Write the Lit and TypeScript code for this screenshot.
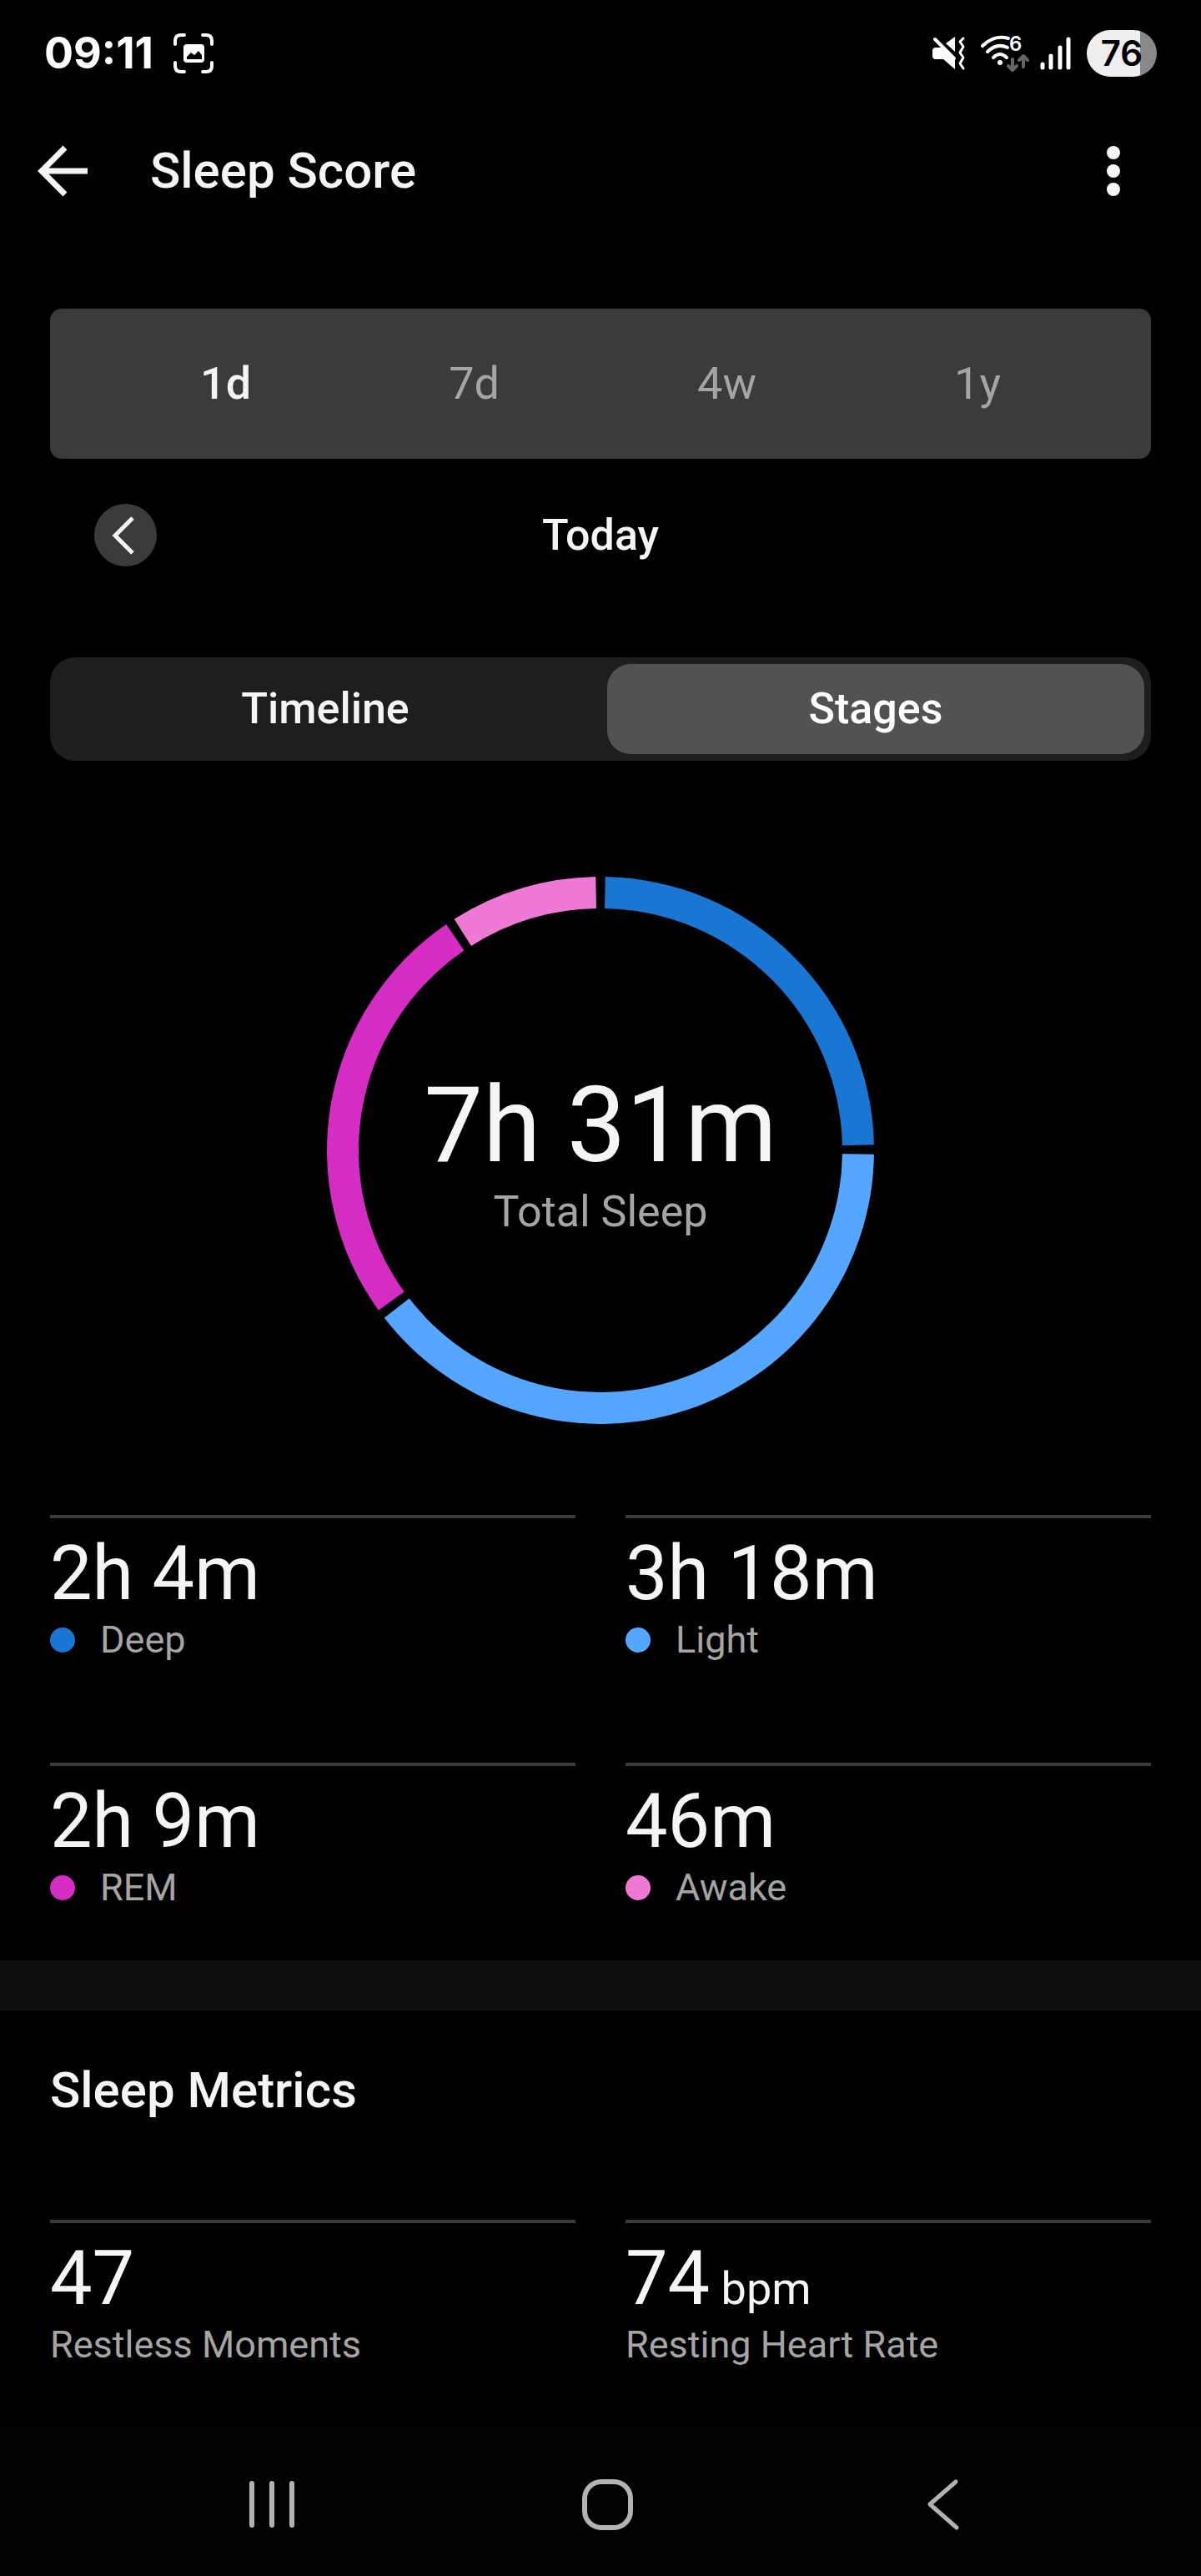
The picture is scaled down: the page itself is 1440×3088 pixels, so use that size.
import { LitElement, html, svg, css } from "lit";
import { customElement, state } from "lit/decorators.js";
import { classMap } from "lit/directives/class-map.js";

interface Stage {
  name: string;
  minutes: number;
  color: string;
}

const STAGES: Stage[] = [
  { name: "Deep", minutes: 124, color: "#1976d2" },
  { name: "Light", minutes: 198, color: "#54a6ff" },
  { name: "REM", minutes: 129, color: "#d52cc3" },
  { name: "Awake", minutes: 46, color: "#ee7ad5" },
];

const formatMinutes = (total: number): string => {
  const hours = Math.floor(total / 60);
  const minutes = total % 60;
  return hours > 0 ? `${hours}h ${minutes}m` : `${minutes}m`;
};

@customElement("status-bar")
export class StatusBar extends LitElement {
  static styles = css`
    :host {
      display: flex;
      align-items: center;
      justify-content: space-between;
      height: 128px;
      padding: 0 53px;
      color: #fff;
      font-family: Inter, Roboto, sans-serif;
    }
    .side {
      display: flex;
      align-items: center;
    }
    .left {
      gap: 24px;
    }
    .clock {
      font-size: 52px;
      line-height: 64px;
      font-weight: 700;
    }
    svg {
      display: block;
    }
    .mute {
      margin-right: 16px;
    }
    .wifi {
      margin-right: 12px;
    }
    .signal {
      margin-right: 18px;
    }
    .wifi-gen {
      font-size: 24px;
      font-weight: 600;
    }
    .battery {
      display: flex;
      align-items: center;
      justify-content: center;
      width: 84px;
      height: 56px;
      border-radius: 28px;
      background: linear-gradient(to right, #eee 76%, #888 76%);
      color: #000;
      font-size: 42px;
      line-height: 56px;
      font-weight: 600;
    }
  `;

  render() {
    return html`
      <div class="side left">
        <span class="clock">09:11</span>
        <svg width="48" height="48" viewBox="0 0 48 48" aria-hidden="true">
          <path d="M2 13V9Q2 2 9 2H13M35 2H39Q46 2 46 9V13M46 35V39Q46 46 39 46H35M13 46H9Q2 46 2 39V35" fill="none" stroke="#fff" stroke-width="4" stroke-linecap="round" />
          <rect x="12" y="13" width="25" height="22" rx="4" fill="#fff" />
          <path d="M16 31V28L21 23L25 26L30 21L34 26V31Z" fill="#000" />
        </svg>
      </div>
      <div class="side">
        <svg class="mute" width="42" height="42" viewBox="0 0 42 42" aria-hidden="true">
          <path d="M1 18Q1 14 5 14H13L28 29V40L14 28H5Q1 28 1 24ZM17 9L28 1V19Z" fill="#fff" />
          <path d="M4 4L27 27" stroke="#fff" stroke-width="4" stroke-linecap="round" />
          <path d="M38 3L34 7L38 13L34 20L38 26L34 33L38 39" fill="none" stroke="#fff" stroke-width="3" stroke-linecap="round" stroke-linejoin="round" />
        </svg>
        <svg class="wifi" width="60" height="62" viewBox="0 -8 60 62" aria-hidden="true">
          <path d="M3 14Q17 0 34 5M9 21Q20 10 33 16M16 28Q24 20 32 28" fill="none" stroke="#fff" stroke-width="4" stroke-linecap="round" />
          <circle cx="24" cy="34" r="3" fill="#fff" />
          <text class="wifi-gen" x="35" y="20" fill="#fff">6</text>
          <path d="M39 30V43M34 38L39 43L44 38M52 39V26M47 31L52 26L57 31" fill="none" stroke="#666" stroke-width="4" stroke-linecap="round" stroke-linejoin="round" />
        </svg>
        <svg class="signal" width="38" height="42" viewBox="0 0 38 42" aria-hidden="true">
          <path d="M3 34V38M13 24V38M24 14V38M34 4V38" stroke="#fff" stroke-width="5" stroke-linecap="round" />
        </svg>
        <span class="battery">76</span>
      </div>
    `;
  }
}

@customElement("sleep-donut")
export class SleepDonut extends LitElement {
  static styles = css`
    :host {
      display: grid;
      place-items: center;
    }
    .ring,
    .total {
      grid-area: 1 / 1;
    }
    .ring {
      display: block;
      width: 656px;
      height: 656px;
    }
    .total {
      display: flex;
      flex-direction: column;
      align-items: center;
      gap: 8px;
      padding-top: 12px;
    }
    .value {
      font-size: 126px;
      line-height: 128px;
      color: #f5f5f5;
    }
    .label {
      font-size: 52px;
      line-height: 64px;
      color: #a5a5a5;
    }
  `;

  private arc(from: number, to: number): string {
    const point = (deg: number, r: number) => {
      const a = ((deg - 90) * Math.PI) / 180;
      return `${(328 + r * Math.cos(a)).toFixed(2)} ${(328 + r * Math.sin(a)).toFixed(2)}`;
    };
    const large = to - from > 180 ? 1 : 0;
    return `M${point(from, 328)}A328 328 0 ${large} 1 ${point(to, 328)}L${point(to, 290)}A290 290 0 ${large} 0 ${point(from, 290)}Z`;
  }

  render() {
    const sum = STAGES.reduce((n, s) => n + s.minutes, 0);
    let angle = 0;
    const arcs = STAGES.map((s) => {
      const from = angle;
      angle += (s.minutes / sum) * 360;
      return svg`<path d=${this.arc(from + 1, angle - 1)} fill=${s.color} />`;
    });
    const asleep = STAGES.filter((s) => s.name !== "Awake").reduce((n, s) => n + s.minutes, 0);
    return html`
      <svg class="ring" viewBox="0 0 656 656" aria-hidden="true">${arcs}</svg>
      <div class="total">
        <span class="value">${formatMinutes(asleep)}</span>
        <span class="label">Total Sleep</span>
      </div>
    `;
  }
}

@customElement("app-root")
export class AppRoot extends LitElement {
  @state() private period = "1d";
  @state() private view = "Stages";

  static styles = css`
    :host {
      display: flex;
      flex-direction: column;
      min-height: 100vh;
      background: #000;
      color: #f5f5f5;
      font-family: Roboto, sans-serif;
    }
    button {
      display: flex;
      align-items: center;
      justify-content: center;
      margin: 0;
      padding: 0;
      border: 0;
      background: none;
      color: inherit;
      font: inherit;
    }
    svg {
      display: block;
    }
    h1,
    h2,
    dl,
    dd {
      margin: 0;
    }
    .app-bar {
      display: flex;
      align-items: center;
      height: 154px;
      padding: 0 60px 0 40px;
    }
    .back {
      margin-right: 68px;
    }
    .title,
    .section-title {
      font-size: 60px;
      line-height: 72px;
      font-weight: 500;
    }
    .title {
      flex: 1;
    }
    .content {
      display: flex;
      flex-direction: column;
      padding: 88px 60px 0;
    }
    .periods {
      display: flex;
      justify-content: space-between;
      height: 180px;
      padding: 0 180px;
      border-radius: 14px;
      background: #3b3b3b;
    }
    .period {
      font-size: 54px;
      line-height: 64px;
      color: #a5a5a5;
    }
    .period.active {
      font-weight: 500;
      color: #f5f5f5;
    }
    .day {
      display: grid;
      grid-template-columns: 75px 1fr 75px;
      align-items: center;
      padding: 54px 53px 0;
      font-size: 52px;
      line-height: 75px;
      font-weight: 500;
      text-align: center;
    }
    .prev {
      width: 75px;
      height: 75px;
      border-radius: 50%;
      background: #3b3b3b;
    }
    .views {
      display: grid;
      grid-template-columns: 1fr 1fr;
      gap: 16px;
      margin-top: 109px;
      padding: 8px;
      border-radius: 30px;
      background: #1e1e1e;
    }
    .view {
      height: 108px;
      border-radius: 28px;
      font-size: 52px;
      line-height: 64px;
      font-weight: 500;
    }
    .view.active {
      background: #525252;
      color: #fff;
    }
    .donut {
      margin-top: 139px;
    }
    .stats {
      display: grid;
      grid-template-columns: 1fr 1fr;
      column-gap: 60px;
      row-gap: 119px;
    }
    .stages {
      margin-top: 109px;
    }
    .stat {
      display: flex;
      flex-direction: column;
      padding-top: 16px;
      border-top: 4px solid #3b3b3b;
    }
    .stat-value {
      font-size: 90px;
      line-height: 102px;
    }
    .unit {
      font-size: 54px;
      line-height: 54px;
    }
    .stat-label {
      display: flex;
      align-items: center;
      gap: 30px;
      order: 1;
      font-size: 45px;
      line-height: 56px;
      color: #a5a5a5;
    }
    .dot {
      width: 30px;
      height: 30px;
      border-radius: 50%;
    }
    .band {
      height: 60px;
      margin-top: 59px;
      background: #101010;
    }
    .metrics {
      display: flex;
      flex-direction: column;
      gap: 119px;
      padding: 60px 60px 0;
    }
    .nav {
      display: flex;
      box-sizing: border-box;
      align-items: center;
      justify-content: space-between;
      height: 180px;
      margin-top: auto;
      padding: 8px 265px 0 280px;
      background: #020202;
    }
  `;

  private periodButton(name: string) {
    return html`<button
      class=${classMap({ period: true, active: this.period === name })}
      aria-pressed=${this.period === name}
      @click=${() => (this.period = name)}
    >${name}</button>`;
  }

  private viewButton(name: string) {
    return html`<button
      class=${classMap({ view: true, active: this.view === name })}
      aria-pressed=${this.view === name}
      @click=${() => (this.view = name)}
    >${name}</button>`;
  }

  render() {
    return html`
      <status-bar></status-bar>
      <header class="app-bar">
        <button class="back" aria-label="Back">
          <svg width="72" height="72" viewBox="0 0 72 72" aria-hidden="true">
            <path d="M65 36H10M38 8L10 36L38 64" fill="none" stroke="#f5f5f5" stroke-width="7" />
          </svg>
        </button>
        <h1 class="title">Sleep Score</h1>
        <button aria-label="More options">
          <svg width="90" height="72" viewBox="0 0 90 72" fill="#f5f5f5" aria-hidden="true">
            <circle cx="45" cy="14" r="8" /><circle cx="45" cy="36" r="8" /><circle cx="45" cy="58" r="8" />
          </svg>
        </button>
      </header>
      <main>
        <div class="content">
          <div class="periods">${["1d", "7d", "4w", "1y"].map((p) => this.periodButton(p))}</div>
          <div class="day">
            <button class="prev" aria-label="Previous day">
              <svg width="75" height="75" viewBox="0 0 75 75" aria-hidden="true">
                <path d="M46 17L25 38L46 59" fill="none" stroke="#f5f5f5" stroke-width="5" />
              </svg>
            </button>
            <span>Today</span>
          </div>
          <div class="views">${["Timeline", "Stages"].map((v) => this.viewButton(v))}</div>
          <sleep-donut class="donut"></sleep-donut>
          <dl class="stats stages">
            ${STAGES.map(
              (s) => html`<div class="stat">
                <dt class="stat-label"><span class="dot" style="background:${s.color}"></span>${s.name}</dt>
                <dd class="stat-value">${formatMinutes(s.minutes)}</dd>
              </div>`
            )}
          </dl>
        </div>
        <div class="band"></div>
        <section class="metrics">
          <h2 class="section-title">Sleep Metrics</h2>
          <dl class="stats">
            <div class="stat">
              <dt class="stat-label">Restless Moments</dt>
              <dd class="stat-value">47</dd>
            </div>
            <div class="stat">
              <dt class="stat-label">Resting Heart Rate</dt>
              <dd class="stat-value">74<span class="unit"> bpm</span></dd>
            </div>
          </dl>
        </section>
      </main>
      <nav class="nav" aria-label="System">
        <button aria-label="Recent apps">
          <svg width="90" height="72" viewBox="0 0 90 72" aria-hidden="true">
            <path d="M22 11V61M46 11V61M70 11V61" stroke="#b3b3b3" stroke-width="6" stroke-linecap="round" />
          </svg>
        </button>
        <button aria-label="Home">
          <svg width="90" height="72" viewBox="0 0 90 72" aria-hidden="true">
            <rect x="18" y="9" width="55" height="55" rx="20" fill="none" stroke="#b3b3b3" stroke-width="6" />
          </svg>
        </button>
        <button aria-label="Back">
          <svg width="90" height="72" viewBox="0 0 90 72" aria-hidden="true">
            <path d="M61 9L30 36L62 64" fill="none" stroke="#b3b3b3" stroke-width="5" stroke-linecap="round" stroke-linejoin="round" />
          </svg>
        </button>
      </nav>
    `;
  }
}
